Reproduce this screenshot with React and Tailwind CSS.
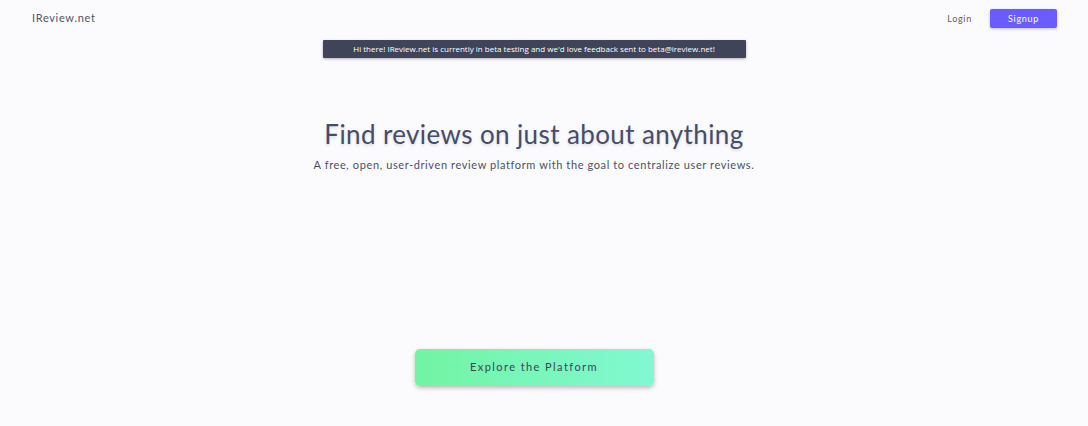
import React from 'react';

export default function App() {
  return (
    <div className="min-h-[426px] w-full bg-[#fbfbfd] text-[#4a5068]" style={{ fontFamily: 'Lato, "Open Sans", sans-serif' }}>
      <nav className="flex items-center justify-between h-[37px] pl-[32px] pr-[31px]">
        <span className="text-[11px] tracking-[0.06em] text-[#4e5469]">IReview.net</span>
        <div className="flex items-center gap-[18px]">
          <button className="text-[9px] tracking-[0.08em] text-[#5b6070]">Login</button>
          <button className="w-[67px] h-[19px] rounded-[2px] bg-[#6a5cff] text-white text-[9px] tracking-[0.08em] shadow-[0_1px_3px_rgba(0,0,0,0.25)]">Signup</button>
        </div>
      </nav>
      <main className="pr-[20px]">
        <div className="flex justify-center mt-[3px]">
          <div className="w-[423px] h-[18px] bg-[#3f4459] rounded-[1px] flex items-center justify-center text-white text-[8px] shadow-[0_1px_3px_rgba(0,0,0,0.3)]" style={{ fontFamily: '"Open Sans", sans-serif' }}>
            Hi there! IReview.net is currently in beta testing and we'd love feedback sent to beta@ireview.net!
          </div>
        </div>
        <div className="flex flex-col items-center mt-[60px]">
          <h1 className="text-[26px] leading-[32px] tracking-[0.015em] text-[#464d68] [text-shadow:0_2px_3px_rgba(0,0,0,0.12)]">Find reviews on just about anything</h1>
          <p className="mt-[7px] text-[11px] tracking-[0.055em] text-[#4a5068]">A free, open, user-driven review platform with the goal to centralize user reviews.</p>
        </div>
        <div className="flex justify-center mt-[175px]">
          <button className="w-[239px] h-[37px] rounded-[5px] bg-gradient-to-r from-[#72f4a3] to-[#81f8d2] text-[11px] tracking-[0.13em] text-[#3f4352] shadow-[0_2px_4px_rgba(0,0,0,0.25)]">Explore the Platform</button>
        </div>
      </main>
    </div>
  );
}
